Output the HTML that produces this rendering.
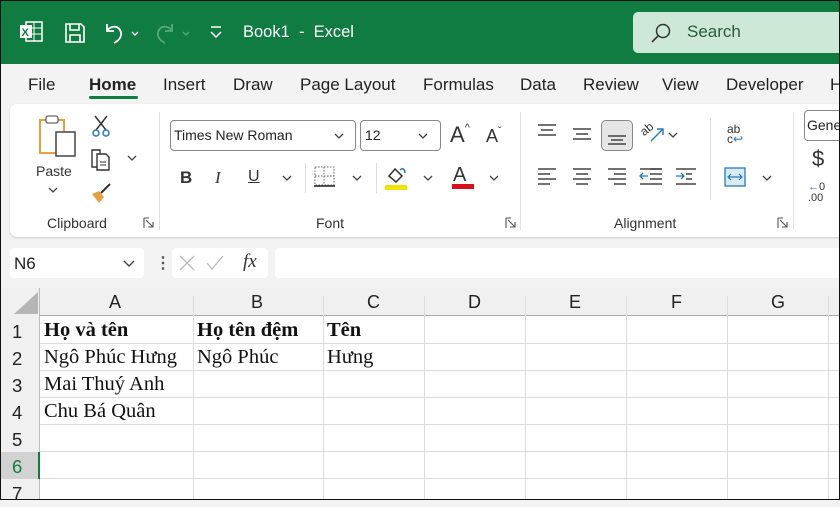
<!DOCTYPE html>
<html><head><meta charset="utf-8"><style>
*{margin:0;padding:0;box-sizing:border-box}
body{width:840px;height:500px;overflow:hidden;background:#f3f3f3;font-family:"Liberation Sans",sans-serif;position:relative}
.a{position:absolute}
.t{color:#222;font-size:17px}
.s{color:#333;font-size:14px}
.g{border-left:1px solid #ddd}
</style></head><body>
<div class="a" style="left:0;top:0;width:840px;height:64px;background:#107c41"></div>
<svg class="a" style="left:18px;top:20px" width="26" height="24"><rect x="8" y="2" width="16" height="19" fill="none" stroke="#fff" stroke-width="1.5"/><line x1="16" y1="2" x2="16" y2="21" stroke="#fff"/><line x1="8" y1="8" x2="24" y2="8" stroke="#fff"/><line x1="8" y1="14" x2="24" y2="14" stroke="#fff"/><rect x="2" y="5" width="12" height="13" fill="#fff"/><text x="3.5" y="16" font-size="11" font-weight="bold" fill="#107c41" font-family="Liberation Sans">X</text></svg>
<svg class="a" style="left:63px;top:21px" width="24" height="24"><path d="M3 3h15l3 3v15H3z M7 3v6h9V3 M7 21v-7h10v7" fill="none" stroke="#fff" stroke-width="1.6"/></svg>
<svg class="a" style="left:102px;top:21px" width="40" height="24"><path d="M5 3v7h7 M5 10c3-5 10-6 13-1s0 10-6 13" fill="none" stroke="#fff" stroke-width="1.8"/><path d="M30 11l3 3 3-3" fill="none" stroke="#fff" stroke-width="1.4"/></svg>
<svg class="a" style="left:152px;top:21px" width="40" height="24" opacity=".55"><path d="M20 3v7h-7 M20 10c-3-5-10-6-13-1s0 10 6 13" fill="none" stroke="#8fd0a8" stroke-width="1.8"/><path d="M31 11l3 3 3-3" fill="none" stroke="#8fd0a8" stroke-width="1.4"/></svg>
<svg class="a" style="left:208px;top:24px" width="16" height="16"><line x1="3" y1="3" x2="13" y2="3" stroke="#fff" stroke-width="1.5"/><path d="M3 8l5 5 5-5" fill="none" stroke="#fff" stroke-width="1.5"/></svg>
<div class="a" style="left:243px;top:23px;color:#fff;font-size:16.5px">Book1&nbsp; - &nbsp;Excel</div>
<div class="a" style="left:633px;top:12px;width:215px;height:41px;background:#cde8d6;border-radius:5px"></div>
<svg class="a" style="left:650px;top:22px" width="22" height="22"><circle cx="13" cy="9" r="6.5" fill="none" stroke="#333" stroke-width="1.5"/><line x1="8" y1="14" x2="2" y2="20" stroke="#333" stroke-width="1.6"/></svg>
<div class="a" style="left:687px;top:22px;color:#2a5a3c;font-size:17px">Search</div>
<div class="a t" style="left:28px;top:75px">File</div>
<div class="a t" style="left:89px;top:75px;font-weight:bold;color:#222">Home</div>
<div class="a" style="left:89px;top:96px;width:49px;height:3px;background:#107c41;border-radius:2px"></div>
<div class="a t" style="left:163px;top:75px">Insert</div>
<div class="a t" style="left:233px;top:75px">Draw</div>
<div class="a t" style="left:300px;top:75px">Page Layout</div>
<div class="a t" style="left:423px;top:75px">Formulas</div>
<div class="a t" style="left:520px;top:75px">Data</div>
<div class="a t" style="left:583px;top:75px">Review</div>
<div class="a t" style="left:662px;top:75px">View</div>
<div class="a t" style="left:726px;top:75px">Developer</div>
<div class="a t" style="left:830px;top:75px">H</div>
<div class="a" style="left:10px;top:104px;width:840px;height:133px;background:#fff;border-radius:7px;box-shadow:0 1px 2px #ccc"></div>
<svg class="a" style="left:38px;top:114px" width="40" height="45"><rect x="2" y="6" width="24" height="33" fill="none" stroke="#e8a040" stroke-width="2"/><rect x="8" y="2" width="12" height="7" fill="#fff" stroke="#666" stroke-width="1.3" rx="2"/><rect x="18" y="18" width="19" height="24" fill="#fff" stroke="#444" stroke-width="1.5"/></svg>
<div class="a s" style="left:36px;top:163px">Paste</div>
<svg class="a" style="left:48px;top:186px" width="10" height="8"><path d="M1 2l4 4 4-4" fill="none" stroke="#444" stroke-width="1.3"/></svg>
<svg class="a" style="left:91px;top:114px" width="20" height="24"><path d="M4 2l11 14 M16 2L5 16" stroke="#333" stroke-width="1.5"/><circle cx="5" cy="19" r="3" fill="none" stroke="#2a7ab8" stroke-width="1.5"/><circle cx="15" cy="19" r="3" fill="none" stroke="#2a7ab8" stroke-width="1.5"/></svg>
<svg class="a" style="left:89px;top:148px" width="24" height="24"><path d="M3 2h8v17H3z" fill="none" stroke="#333" stroke-width="1.4"/><path d="M8 6h9l3 3v13H8z" fill="#fff" stroke="#333" stroke-width="1.4"/><line x1="11" y1="14" x2="17" y2="14" stroke="#333"/><line x1="11" y1="17" x2="17" y2="17" stroke="#333"/></svg>
<svg class="a" style="left:127px;top:154px" width="10" height="8"><path d="M1 2l4 4 4-4" fill="none" stroke="#444" stroke-width="1.3"/></svg>
<svg class="a" style="left:89px;top:182px" width="26" height="22"><path d="M3 12l7-3 5 6-5 6z" fill="#e8a040"/><path d="M12 11l9-9" stroke="#333" stroke-width="2"/></svg>
<div class="a s" style="left:47px;top:215px">Clipboard</div>
<svg class="a" style="left:143px;top:217px" width="12" height="12"><path d="M1 1h5M1 1v10 M3 3l7 7M5 10h5V5" fill="none" stroke="#555" stroke-width="1.1"/></svg>
<div class="a" style="left:159px;top:112px;width:1px;height:118px;background:#e0e0e0"></div>
<div class="a" style="left:170px;top:120px;width:186px;height:31px;border:1px solid #888;border-radius:4px"></div>
<div class="a" style="left:174px;top:127px;font-size:14px;color:#222">Times New Roman</div>
<svg class="a" style="left:334px;top:132px" width="10" height="8"><path d="M1 2l4 4 4-4" fill="none" stroke="#444" stroke-width="1.3"/></svg>
<div class="a" style="left:360px;top:120px;width:81px;height:31px;border:1px solid #888;border-radius:4px"></div>
<div class="a" style="left:365px;top:127px;font-size:14px;color:#222">12</div>
<svg class="a" style="left:418px;top:132px" width="10" height="8"><path d="M1 2l4 4 4-4" fill="none" stroke="#444" stroke-width="1.3"/></svg>
<div class="a" style="left:450px;top:122px;font-size:22px;color:#333">A<span style="font-size:11px;vertical-align:top">^</span></div>
<div class="a" style="left:486px;top:126px;font-size:18px;color:#333">A<span style="font-size:10px;vertical-align:top">ˇ</span></div>
<div class="a" style="left:180px;top:168px;font-size:17px;font-weight:bold;color:#333">B</div>
<div class="a" style="left:215px;top:168px;font-size:17px;font-style:italic;font-family:'Liberation Serif';color:#333">I</div>
<div class="a" style="left:248px;top:168px;font-size:16px;text-decoration:underline;color:#333">U</div>
<svg class="a" style="left:282px;top:174px" width="10" height="8"><path d="M1 2l4 4 4-4" fill="none" stroke="#444" stroke-width="1.3"/></svg>
<div class="a" style="left:305px;top:163px;width:1px;height:30px;background:#ddd"></div>
<svg class="a" style="left:314px;top:166px" width="22" height="22"><rect x="1" y="1" width="19" height="18" fill="none" stroke="#666" stroke-dasharray="1.5 1.5"/><line x1="10" y1="1" x2="10" y2="19" stroke="#666" stroke-dasharray="1.5 1.5"/><line x1="1" y1="10" x2="20" y2="10" stroke="#666" stroke-dasharray="1.5 1.5"/><line x1="0" y1="20" x2="21" y2="20" stroke="#222" stroke-width="1.6"/></svg>
<svg class="a" style="left:352px;top:174px" width="10" height="8"><path d="M1 2l4 4 4-4" fill="none" stroke="#444" stroke-width="1.3"/></svg>
<div class="a" style="left:376px;top:163px;width:1px;height:30px;background:#ddd"></div>
<svg class="a" style="left:384px;top:164px" width="26" height="28"><path d="M5 12l6-7 7 7-6 6z" fill="none" stroke="#333" stroke-width="1.5"/><path d="M16 6c3-3 5 0 5 3" fill="none" stroke="#2a7ab8" stroke-width="1.5"/><rect x="1" y="21" width="22" height="5" fill="#f2e300"/></svg>
<svg class="a" style="left:423px;top:174px" width="10" height="8"><path d="M1 2l4 4 4-4" fill="none" stroke="#444" stroke-width="1.3"/></svg>
<div class="a" style="left:453px;top:164px;font-size:20px;color:#333">A</div>
<div class="a" style="left:452px;top:184px;width:22px;height:5px;background:#d9101a"></div>
<svg class="a" style="left:489px;top:174px" width="10" height="8"><path d="M1 2l4 4 4-4" fill="none" stroke="#444" stroke-width="1.3"/></svg>
<div class="a s" style="left:316px;top:215px">Font</div>
<svg class="a" style="left:505px;top:217px" width="12" height="12"><path d="M1 1h5M1 1v10 M3 3l7 7M5 10h5V5" fill="none" stroke="#555" stroke-width="1.1"/></svg>
<div class="a" style="left:520px;top:112px;width:1px;height:118px;background:#e0e0e0"></div>
<svg class="a" style="left:536px;top:122px" width="24" height="20"><path d="M2 3h18M5 8h12M2 13h18" stroke="#444" stroke-width="1.4"/></svg>
<svg class="a" style="left:571px;top:126px" width="24" height="20"><path d="M2 3h18M5 8h12M2 13h18" stroke="#444" stroke-width="1.4"/></svg>
<div class="a" style="left:601px;top:120px;width:32px;height:31px;background:#e6e6e6;border:1px solid #888;border-radius:5px"></div>
<svg class="a" style="left:606px;top:128px" width="24" height="20"><path d="M2 8h18M5 12h12M2 16h18" stroke="#444" stroke-width="1.4"/></svg>
<div class="a" style="left:640px;top:122px;font-size:12px;color:#333;transform:rotate(-40deg)">ab</div>
<svg class="a" style="left:648px;top:125px" width="20" height="20"><path d="M3 16L15 4 M9 4h6v6" fill="none" stroke="#2a7ab8" stroke-width="1.4"/></svg>
<svg class="a" style="left:668px;top:131px" width="10" height="8"><path d="M1 2l4 4 4-4" fill="none" stroke="#444" stroke-width="1.3"/></svg>
<svg class="a" style="left:536px;top:166px" width="160" height="22"><g stroke="#444" stroke-width="1.4"><path d="M2 3h18M2 8h12M2 13h18M2 18h12"/><path d="M37 3h18M40 8h12M37 13h18M40 18h12"/><path d="M72 3h18M78 8h12M72 13h18M78 18h12"/><path d="M114 3h12M114 8h12M114 13h12M104 18h22"/><path d="M104 3h22M150 8h6M150 13h6M140 18h22M140 3h22"/></g><path d="M112 10h-8m3-3l-3 3 3 3" fill="none" stroke="#2a7ab8" stroke-width="1.3"/><path d="M140 10h8m-3-3l3 3-3 3" fill="none" stroke="#2a7ab8" stroke-width="1.3"/></svg>
<div class="a" style="left:710px;top:118px;width:1px;height:82px;background:#ddd"></div>
<div class="a" style="left:727px;top:124px;font-size:12px;color:#333;line-height:10px">ab<br>c<span style="color:#2a7ab8">↩</span></div>
<svg class="a" style="left:724px;top:166px" width="24" height="22"><rect x="1" y="2" width="20" height="18" fill="#d8ecf8" stroke="#2a7ab8" stroke-width="1.3"/><path d="M5 11h12M7 8l-3 3 3 3M15 8l3 3-3 3" fill="none" stroke="#2a7ab8" stroke-width="1.2"/></svg>
<svg class="a" style="left:762px;top:174px" width="10" height="8"><path d="M1 2l4 4 4-4" fill="none" stroke="#444" stroke-width="1.3"/></svg>
<div class="a s" style="left:614px;top:215px">Alignment</div>
<svg class="a" style="left:777px;top:217px" width="12" height="12"><path d="M1 1h5M1 1v10 M3 3l7 7M5 10h5V5" fill="none" stroke="#555" stroke-width="1.1"/></svg>
<div class="a" style="left:793px;top:112px;width:1px;height:118px;background:#e0e0e0"></div>
<div class="a" style="left:804px;top:110px;width:50px;height:31px;border:1px solid #888;border-radius:4px"></div>
<div class="a" style="left:807px;top:117px;font-size:14px;color:#222">Gene</div>
<div class="a" style="left:812px;top:146px;font-size:22px;color:#333">$</div>
<div class="a" style="left:808px;top:182px;font-size:11px;color:#333;line-height:11px"><span style="color:#2a7ab8">←</span>0<br>.00</div>
<div class="a" style="left:10px;top:248px;width:134px;height:30px;background:#fff;border-radius:4px"></div>
<div class="a" style="left:14px;top:254px;font-size:17px;color:#222">N6</div>
<svg class="a" style="left:123px;top:259px" width="12" height="9"><path d="M1 2l5 5 5-5" fill="none" stroke="#444" stroke-width="1.4"/></svg>
<div class="a" style="left:155px;top:253px;font-size:16px;color:#555;font-weight:bold">⋮</div>
<div class="a" style="left:172px;top:248px;width:96px;height:30px;background:#fff;border-radius:4px"></div>
<svg class="a" style="left:177px;top:253px" width="60" height="20"><path d="M3 3l14 14M17 3L3 17" stroke="#bbb" stroke-width="1.3"/><path d="M30 10l5 6 11-13" fill="none" stroke="#bbb" stroke-width="1.3"/></svg>
<div class="a" style="left:243px;top:251px;font-size:19px;font-style:italic;font-family:'Liberation Serif';color:#333">fx</div>
<div class="a" style="left:275px;top:248px;width:570px;height:30px;background:#fff;border-radius:4px"></div>
<div class="a" style="left:0;top:288px;width:840px;height:212px;background:#fff"></div>
<div class="a" style="left:0;top:288px;width:840px;height:28px;background:#f0f0f0;border-bottom:1px solid #aaa"></div>
<div class="a" style="left:0;top:288px;width:40px;height:212px;background:#f0f0f0;border-right:1px solid #bbb"></div>
<svg class="a" style="left:14px;top:292px" width="24" height="22"><path d="M24 0V22H0z" fill="#b5b5b5"/></svg>
<div class="a" style="left:0;top:452px;width:40px;height:27px;background:#d2d2d2;border-right:2px solid #107c41"></div>
<div class="a g" style="left:193px;top:296px;height:204px"></div>
<div class="a g" style="left:323px;top:296px;height:204px"></div>
<div class="a g" style="left:424px;top:296px;height:204px"></div>
<div class="a g" style="left:525px;top:296px;height:204px"></div>
<div class="a g" style="left:626px;top:296px;height:204px"></div>
<div class="a g" style="left:727px;top:296px;height:204px"></div>
<div class="a g" style="left:828px;top:296px;height:204px"></div>
<div class="a" style="left:40px;top:343px;width:800px;height:1px;background:#ddd"></div>
<div class="a" style="left:40px;top:370px;width:800px;height:1px;background:#ddd"></div>
<div class="a" style="left:40px;top:397px;width:800px;height:1px;background:#ddd"></div>
<div class="a" style="left:40px;top:424px;width:800px;height:1px;background:#ddd"></div>
<div class="a" style="left:40px;top:451px;width:800px;height:1px;background:#ddd"></div>
<div class="a" style="left:40px;top:478px;width:800px;height:1px;background:#ddd"></div>
<div class="a" style="font-size:18px;color:#222;top:292px;left:109px">A</div>
<div class="a" style="font-size:18px;color:#222;top:292px;left:251px">B</div>
<div class="a" style="font-size:18px;color:#222;top:292px;left:367px">C</div>
<div class="a" style="font-size:18px;color:#222;top:292px;left:468px">D</div>
<div class="a" style="font-size:18px;color:#222;top:292px;left:569px">E</div>
<div class="a" style="font-size:18px;color:#222;top:292px;left:671px">F</div>
<div class="a" style="font-size:18px;color:#222;top:292px;left:771px">G</div>
<div class="a" style="font-size:18.5px;color:#222;left:12px;top:318px;line-height:27px">1<br>2<br>3<br>4<br>5<br><span style="color:#107c41">6</span><br>7</div>
<div class="a" style="font-family:'Liberation Serif';font-size:20.5px;color:#111;left:44px;top:317px;line-height:27px"><b>Họ và tên</b><br>Ngô Phúc Hưng<br>Mai Thuý Anh<br>Chu Bá Quân</div>
<div class="a" style="font-family:'Liberation Serif';font-size:20.5px;color:#111;left:197px;top:317px;line-height:27px"><b>Họ tên đệm</b><br>Ngô Phúc</div>
<div class="a" style="font-family:'Liberation Serif';font-size:20.5px;color:#111;left:327px;top:317px;line-height:27px"><b>Tên</b><br>Hưng</div>
<div class="a" style="left:0;top:0;width:840px;height:500px;border:1px solid #111"></div>
</body></html>
